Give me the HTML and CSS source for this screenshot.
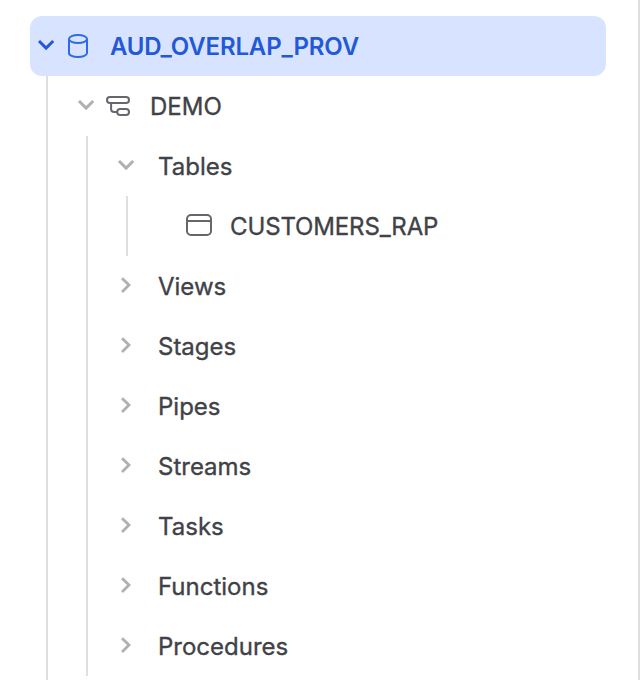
FILE: index.html
```
<!DOCTYPE html>
<html lang="en">
<head>
<meta charset="utf-8">
<title>Object browser</title>
<link rel="stylesheet" href="styles.css">
</head>
<body>
<svg width="0" height="0" class="sprite" aria-hidden="true">
  <symbol id="down" viewBox="0 0 32 60"><path d="M9 25l7.1 7.1L23.2 25" stroke-width="3"/></symbol>
  <symbol id="right" viewBox="0 0 32 60"><path d="M12 22.2l7 6.9-7 6.9" stroke-width="2.8"/></symbol>
  <symbol id="database" viewBox="0 0 32 60"><g stroke-width="2"><ellipse cx="16" cy="23" rx="9" ry="4"/><path d="M7 23v14c0 2.4 4 4 9 4s9-1.6 9-4V23"/></g></symbol>
  <symbol id="schema" viewBox="0 0 32 60"><g stroke-width="2"><rect x="5" y="21" width="22" height="6" rx="3"/><rect x="15.2" y="33" width="11.8" height="6" rx="3"/><path d="M9.1 27v6q0 3 3 3h3.1"/></g></symbol>
  <symbol id="table" viewBox="0 0 32 60"><g stroke-width="2"><rect x="5" y="19" width="24" height="20" rx="4"/><path d="M5 25h24"/></g></symbol>
</svg>
<nav class="panel">
  <ul class="tree">
    <li>
      <div class="row selected"><svg class="chevron"><use href="#down"/></svg><svg class="icon"><use href="#database"/></svg><span class="label">AUD_OVERLAP_PROV</span></div>
      <ul class="children schemas">
        <li>
          <div class="row"><svg class="chevron"><use href="#down"/></svg><svg class="icon"><use href="#schema"/></svg><span class="label">DEMO</span></div>
          <ul class="children">
            <li>
              <div class="row"><svg class="chevron"><use href="#down"/></svg><span class="label">Tables</span></div>
              <ul class="children">
                <li><div class="row leaf"><svg class="icon"><use href="#table"/></svg><span class="label">CUSTOMERS_RAP</span></div></li>
              </ul>
            </li>
            <li><div class="row"><svg class="chevron"><use href="#right"/></svg><span class="label">Views</span></div></li>
            <li><div class="row"><svg class="chevron"><use href="#right"/></svg><span class="label">Stages</span></div></li>
            <li><div class="row"><svg class="chevron"><use href="#right"/></svg><span class="label">Pipes</span></div></li>
            <li><div class="row"><svg class="chevron"><use href="#right"/></svg><span class="label">Streams</span></div></li>
            <li><div class="row"><svg class="chevron"><use href="#right"/></svg><span class="label">Tasks</span></div></li>
            <li><div class="row"><svg class="chevron"><use href="#right"/></svg><span class="label">Functions</span></div></li>
            <li><div class="row"><svg class="chevron"><use href="#right"/></svg><span class="label">Procedures</span></div></li>
          </ul>
        </li>
      </ul>
    </li>
  </ul>
</nav>
</body>
</html>
```
FILE: styles.css
```
* { box-sizing: border-box; }
body { margin: 0; background: #fff; }
.sprite { display: none; }
.panel {
  height: 680px;
  padding: 16px 32px 0 30px;
  border-right: 2px solid #dedfe1;
  font: 400 24px/60px Inter, "Liberation Sans", sans-serif;
  font-feature-settings: "calt" 0;
  color: #414247;
  overflow: hidden;
}
ul { list-style: none; margin: 0; padding: 0; }
.children {
  margin-left: 16px;
  padding-left: 22px;
  border-left: 2px solid #dedfe1;
}
.schemas { padding-bottom: 4px; }
.row {
  display: flex;
  height: 60px;
  border-radius: 12px;
}
.row svg {
  width: 32px;
  height: 60px;
  fill: none;
  stroke: currentColor;
  flex: none;
}
.row .chevron { color: #afb0b3; }
.row .icon { color: #66676d; }
.label { margin-left: 16px; padding-top: 1px; white-space: nowrap; -webkit-text-stroke: 0.35px currentColor; }
.leaf { padding-left: 32px; letter-spacing: -0.13px; }
.selected { background: #d8e4ff; color: #2359d6; font-weight: 600; letter-spacing: -0.14px; }
.selected .label { -webkit-text-stroke: 0; }
.selected .chevron { color: #2359d6; }
.selected .icon { color: #2f6ae5; }
```
